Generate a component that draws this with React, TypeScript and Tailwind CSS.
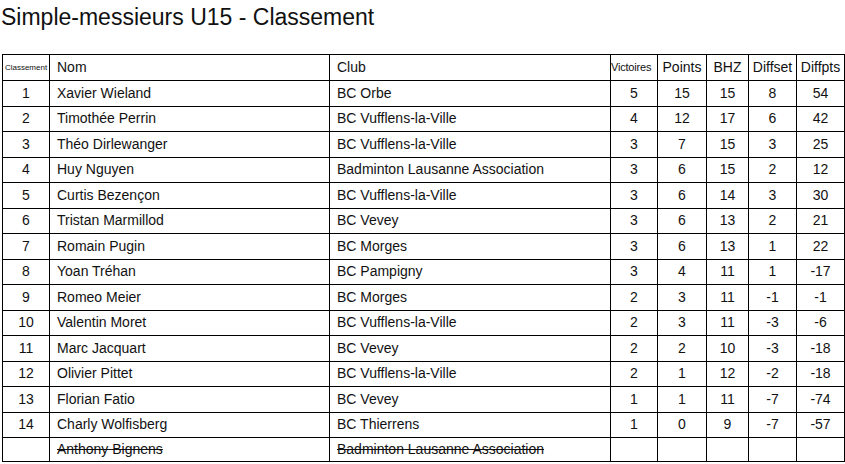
import React from 'react';

type Row = {
  rank: string;
  name: string;
  club: string;
  stats: string[];
  withdrawn?: boolean;
};

const ROWS: Row[] = [
  { rank: '1', name: 'Xavier Wieland', club: 'BC Orbe', stats: ['5', '15', '15', '8', '54'] },
  { rank: '2', name: 'Timothée Perrin', club: 'BC Vufflens-la-Ville', stats: ['4', '12', '17', '6', '42'] },
  { rank: '3', name: 'Théo Dirlewanger', club: 'BC Vufflens-la-Ville', stats: ['3', '7', '15', '3', '25'] },
  { rank: '4', name: 'Huy Nguyen', club: 'Badminton Lausanne Association', stats: ['3', '6', '15', '2', '12'] },
  { rank: '5', name: 'Curtis Bezençon', club: 'BC Vufflens-la-Ville', stats: ['3', '6', '14', '3', '30'] },
  { rank: '6', name: 'Tristan Marmillod', club: 'BC Vevey', stats: ['3', '6', '13', '2', '21'] },
  { rank: '7', name: 'Romain Pugin', club: 'BC Morges', stats: ['3', '6', '13', '1', '22'] },
  { rank: '8', name: 'Yoan Tréhan', club: 'BC Pampigny', stats: ['3', '4', '11', '1', '-17'] },
  { rank: '9', name: 'Romeo Meier', club: 'BC Morges', stats: ['2', '3', '11', '-1', '-1'] },
  { rank: '10', name: 'Valentin Moret', club: 'BC Vufflens-la-Ville', stats: ['2', '3', '11', '-3', '-6'] },
  { rank: '11', name: 'Marc Jacquart', club: 'BC Vevey', stats: ['2', '2', '10', '-3', '-18'] },
  { rank: '12', name: 'Olivier Pittet', club: 'BC Vufflens-la-Ville', stats: ['2', '1', '12', '-2', '-18'] },
  { rank: '13', name: 'Florian Fatio', club: 'BC Vevey', stats: ['1', '1', '11', '-7', '-74'] },
  { rank: '14', name: 'Charly Wolfisberg', club: 'BC Thierrens', stats: ['1', '0', '9', '-7', '-57'] },
  { rank: '', name: 'Anthony Bignens', club: 'Badminton Lausanne Association', stats: ['', '', '', '', ''], withdrawn: true },
];

const cell = 'border border-black p-0';

export default function App() {
  return (
    <div className="w-[845px] h-[464px] overflow-hidden bg-white text-[#111] font-['Liberation_Sans',Arial,sans-serif]">
      <h1 className="pl-[1px] pt-[3px] h-[54px] text-[23px] leading-[28px] font-normal">
        Simple-messieurs U15 - Classement
      </h1>
      <table className="ml-[2px] w-[842px] table-fixed border-collapse text-[14px]">
        <colgroup>
          <col className="w-[47px]" />
          <col className="w-[280px]" />
          <col className="w-[281px]" />
          <col className="w-[47px]" />
          <col className="w-[49px]" />
          <col className="w-[42px]" />
          <col className="w-[48px]" />
          <col className="w-[48px]" />
        </colgroup>
        <thead>
          <tr className="h-[26px]">
            <th className={`${cell} text-[8px] font-normal text-center`}>Classement</th>
            <th className={`${cell} font-normal text-left pl-[7px]`}>Nom</th>
            <th className={`${cell} font-normal text-left pl-[7px]`}>Club</th>
            <th className={`${cell} text-[11px] font-normal text-left tracking-[-0.2px]`}>Victoires</th>
            <th className={`${cell} font-normal text-center`}>Points</th>
            <th className={`${cell} font-normal text-center`}>BHZ</th>
            <th className={`${cell} font-normal text-center`}>Diffset</th>
            <th className={`${cell} font-normal text-center`}>Diffpts</th>
          </tr>
        </thead>
        <tbody>
          {ROWS.map((r, i) => (
            <tr key={`row-${i}`} className={r.withdrawn ? 'h-[24px]' : 'h-[25.5px]'}>
              <td className={`${cell} text-center`}>{r.rank}</td>
              <td className={`${cell} pl-[7px] ${r.withdrawn ? 'line-through' : ''}`}>{r.name}</td>
              <td className={`${cell} pl-[7px] ${r.withdrawn ? 'line-through' : ''}`}>{r.club}</td>
              {r.stats.map((s, j) => (
                <td key={`s-${i}-${j}`} className={`${cell} text-center`}>{s}</td>
              ))}
            </tr>
          ))}
        </tbody>
      </table>
    </div>
  );
}
